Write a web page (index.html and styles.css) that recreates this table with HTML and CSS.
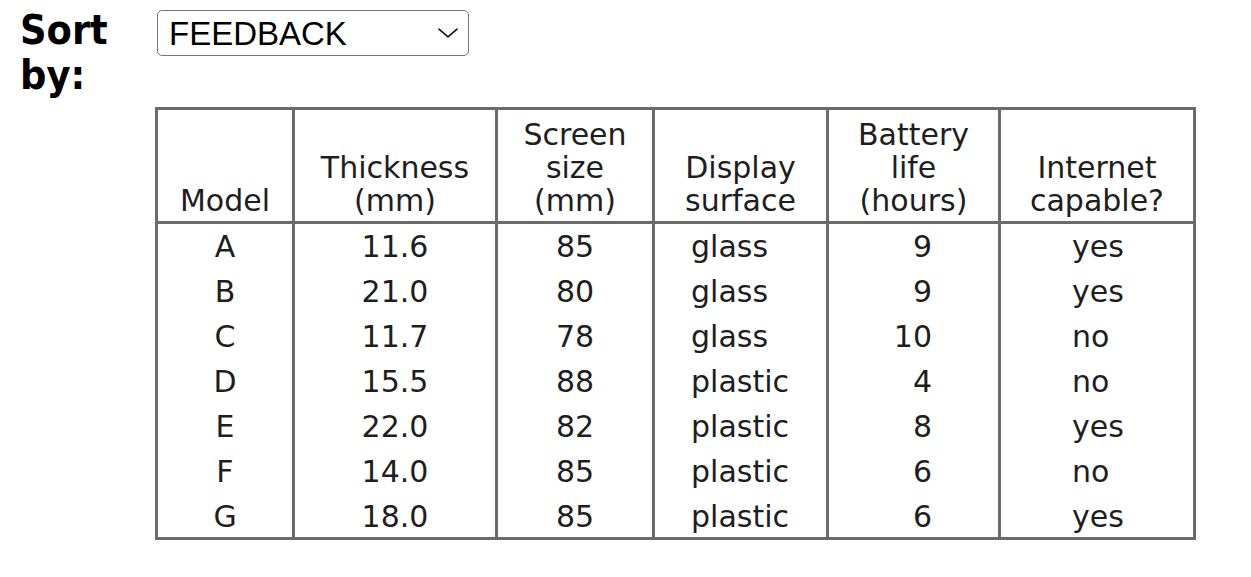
FILE: index.html
```html
<!DOCTYPE html>
<html lang="en">
<head>
<meta charset="utf-8">
<title>Sort by</title>
<link rel="stylesheet" href="styles.css">
</head>
<body>
<div class="page">
  <label class="sort-label" for="sort">Sort by:</label>
  <div class="content">
    <div class="select-wrap">
      <select id="sort" class="sort-select">
        <option>FEEDBACK</option>
      </select>
      <svg class="chevron" viewBox="0 0 20 10" width="20" height="10" aria-hidden="true">
        <path d="M1 1.2 L10 8.8 L19 1.2" fill="none" stroke="#111" stroke-width="1.6" stroke-linecap="round" stroke-linejoin="round"/>
      </svg>
    </div>
    <table class="data">
      <colgroup>
        <col class="c-model">
        <col class="c-thick">
        <col class="c-screen">
        <col class="c-display">
        <col class="c-battery">
        <col class="c-internet">
      </colgroup>
      <thead>
        <tr>
          <th>Model</th>
          <th>Thickness<br>(mm)</th>
          <th>Screen<br>size<br>(mm)</th>
          <th>Display<br>surface</th>
          <th>Battery<br>life<br>(hours)</th>
          <th>Internet<br>capable?</th>
        </tr>
      </thead>
      <tbody>
        <tr><td>A</td><td>11.6</td><td>85</td><td class="left">glass</td><td class="right">9</td><td class="net">yes</td></tr>
        <tr><td>B</td><td>21.0</td><td>80</td><td class="left">glass</td><td class="right">9</td><td class="net">yes</td></tr>
        <tr><td>C</td><td>11.7</td><td>78</td><td class="left">glass</td><td class="right">10</td><td class="net">no</td></tr>
        <tr><td>D</td><td>15.5</td><td>88</td><td class="left">plastic</td><td class="right">4</td><td class="net">no</td></tr>
        <tr><td>E</td><td>22.0</td><td>82</td><td class="left">plastic</td><td class="right">8</td><td class="net">yes</td></tr>
        <tr><td>F</td><td>14.0</td><td>85</td><td class="left">plastic</td><td class="right">6</td><td class="net">no</td></tr>
        <tr class="last"><td>G</td><td>18.0</td><td>85</td><td class="left">plastic</td><td class="right">6</td><td class="net">yes</td></tr>
      </tbody>
    </table>
  </div>
</div>
</body>
</html>
```

FILE: styles.css
```css
body {
  margin: 8px;
  background: #ffffff;
  color: #1e1e1e;
  font-family: "DejaVu Sans", Verdana, sans-serif;
}

.page {
  display: grid;
  grid-template-columns: 137px auto;
  padding-left: 12px;
}

.sort-label {
  font-family: "DejaVu Sans", Verdana, sans-serif;
  font-weight: bold;
  font-stretch: condensed;
  font-size: 41px;
  line-height: 45px;
  color: #000;
}

.content {
  display: flex;
  flex-direction: column;
  align-items: flex-start;
  gap: 51px;
  padding-top: 2px;
}

.select-wrap {
  position: relative;
  width: 312px;
  height: 46px;
}

.sort-select {
  appearance: none;
  -webkit-appearance: none;
  box-sizing: border-box;
  width: 100%;
  height: 100%;
  margin: 0;
  padding: 0 0 0 11px;
  border: 1px solid #767676;
  border-radius: 5px;
  background: #ffffff;
  color: #000;
  font-family: "Liberation Sans", Arial, sans-serif;
  font-size: 33px;
}

.chevron {
  position: absolute;
  left: 281px;
  top: 18px;
  pointer-events: none;
}

.data {
  margin-left: -2px;
  border-collapse: collapse;
  table-layout: fixed;
  width: 1038px;
  border: 3px solid #6b6b6b;
  font-size: 30px;
  color: #1e1e1e;
}

.c-model { width: 137px; }
.c-thick { width: 203px; }
.c-screen { width: 157px; }
.c-display { width: 174px; }
.c-battery { width: 172px; }
.c-internet { width: 195px; }

.data th,
.data td {
  border-left: 3px solid #6b6b6b;
  border-right: 3px solid #6b6b6b;
  padding: 0;
  text-align: center;
  white-space: nowrap;
}

.data th {
  font-weight: normal;
  line-height: 33px;
  height: 107px;
  padding-bottom: 4px;
  vertical-align: bottom;
  border-bottom: 3px solid #6b6b6b;
}

.data td {
  line-height: 45px;
  vertical-align: top;
}

.data tr.last td {
  line-height: 41px;
  padding-top: 2px;
}

.data td.left {
  text-align: left;
  padding-left: 36px;
}

.data td.right {
  text-align: right;
  padding-right: 66px;
}

.data td.net {
  text-align: left;
  padding-left: 71px;
}
```
